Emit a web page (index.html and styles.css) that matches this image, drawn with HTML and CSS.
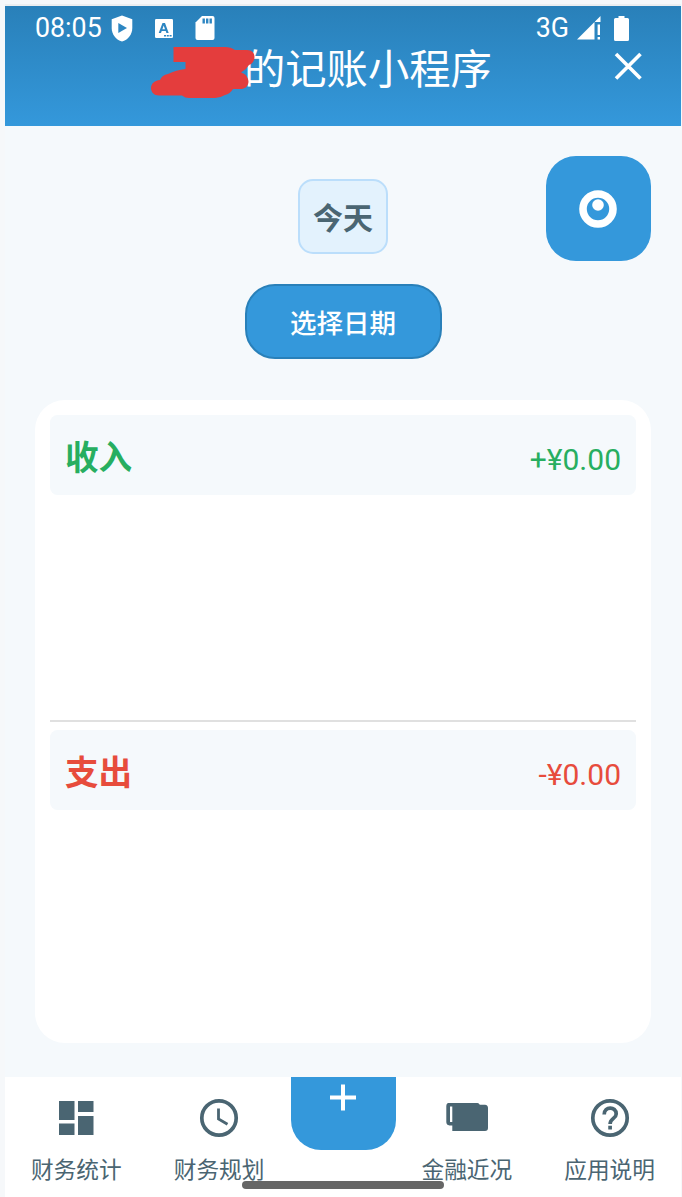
FILE: index.html
```html
<!DOCTYPE html>
<html lang="zh-CN">
<head>
  <meta charset="UTF-8">
  <title>记账小程序</title>
  <link rel="stylesheet" href="styles.css">
</head>
<body>
  <div class="phone">
    <header class="header">
      <div class="statusbar">
        <span class="time">08:05</span>
        <svg class="ic-shield" width="22" height="27" viewBox="0 0 22 27"><path fill="#fff" d="M11 0.500L21.300 4.300V13C21.300 19.500 17 24.800 11 26.600C5 24.800 0.700 19.500 0.700 13V4.300Z"/><path fill="#2d86c2" d="M7.300 8L16 13L7.300 18Z"/></svg>
        <svg class="ic-letter" width="18" height="19" viewBox="0 0 18 19"><rect width="18" height="19" rx="1.2" fill="#fff"/><path fill="#2d86c2" fill-rule="evenodd" d="M7.500 4H10L13.700 14H11.400L10.700 12H6.700L6 14H3.700ZM8.700 6.600L7.400 10.200H10Z"/><path stroke="#2d86c2" stroke-width="1.4" stroke-dasharray="2 0.8" d="M9 16.700H17"/></svg>
        <svg class="ic-sd" width="20" height="24" viewBox="0 0 20 24"><path fill="#fff" d="M7 0H17.500Q19.500 0 19.500 2V22Q19.500 24 17.500 24H2.500Q0.500 24 0.500 22V6.500Z"/><path stroke="#2d86c2" stroke-width="2.4" d="M8.700 2.500V7.500M12.200 2.500V7.500M15.700 2.500V7.500"/></svg>
        <span class="net">3G</span>
        <svg class="ic-signal" width="24" height="24" viewBox="0 0 24 24"><path fill="#fff" d="M0 23.500L17.500 6V23.500ZM18 5.500L23.500 0V6H18ZM20.600 8.500H23V19H20.600ZM20.600 21H23V23.500H20.600Z"/></svg>
        <svg class="ic-battery" width="15" height="25" viewBox="0 0 15 25"><path fill="#fff" d="M4.500 0H10.500V2H13.500Q15 2 15 3.500V23.500Q15 25 13.500 25H1.500Q0 25 0 23.500V3.500Q0 2 1.500 2H4.500Z"/></svg>
      </div>
      <div class="titlebar">
        <h1>的记账小程序</h1>
        <svg class="close" width="28" height="28" viewBox="0 0 28 28"><path stroke="#fff" stroke-width="3.600" d="M2 2L26.500 26.500M26.500 2L2 26.500"/></svg>
      </div>
      <!-- name is scribbled out -->
      <svg class="scribble" width="106" height="52" viewBox="0 0 106 52"><path fill="#e43d3d" d="M22.500 0H74Q80 0 84 3H96C101 3 103.500 6 103.500 10C103.500 14 101 17 98 18Q95 23 90 25.500C95 27 97.500 31 97.500 35C97 40 93 42 90 42H82Q79 47 74 48Q69 51 64 51H38Q34 51 31 48.500H8C3 48.500 0 45 0 41C0 37 3 33.500 9 33Q11 28 17 27Q25 23 34.500 22V15H22.500Z"/></svg>
    </header>

    <main class="content">
      <div class="today">今天</div>
      <div class="pick-date">选择日期</div>
      <div class="eye-btn">
        <svg width="38" height="38" viewBox="0 0 38 38"><circle cx="19" cy="19" r="15" fill="none" stroke="#fff" stroke-width="7.600"/><circle cx="19" cy="15" r="5.800" fill="#fff"/></svg>
      </div>

      <div class="card">
        <section class="part income">
          <div class="row">
            <span class="name">收入</span>
            <span class="sum">+¥0.00</span>
          </div>
        </section>
        <section class="part expense">
          <div class="row">
            <span class="name">支出</span>
            <span class="sum">-¥0.00</span>
          </div>
        </section>
      </div>
    </main>

    <nav class="tabs">
      <div class="tab">
        <svg width="46" height="46" viewBox="0 0 46 46"><path fill="#4a6572" d="M6 6H21.500V25H6ZM25 6H40.500V17H25ZM6 28.500H21.500V40H6ZM25 21H40.500V40H25Z"/></svg>
        <span>财务统计</span>
      </div>
      <div class="tab">
        <svg width="46" height="46" viewBox="0 0 46 46"><g fill="none" stroke="#4a6572"><circle cx="23" cy="23" r="17.200" stroke-width="3.700"/><path stroke-width="2.800" d="M22.500 13.500V24L31.500 29.300"/></g></svg>
        <span>财务规划</span>
      </div>
      <div class="add">
        <svg width="28" height="28" viewBox="0 0 28 28"><path stroke="#fff" stroke-width="4" d="M1 13.500H27M14 0.500V26.500"/></svg>
      </div>
      <div class="tab">
        <svg width="46" height="46" viewBox="0 0 46 46"><path fill="#4a6572" fill-rule="evenodd" d="M4.500 8H33.500Q35 8 35.800 9.800H41Q44 10 44 13V33Q44 36 41 36H8.300V30.500H5.500Q2.300 30 2.300 27V11Q2.500 8 4.500 8ZM6 11.500V27H8.300V11.500Z"/></svg>
        <span>金融近况</span>
      </div>
      <div class="tab">
        <svg width="46" height="46" viewBox="0 0 46 46"><g fill="none" stroke="#4a6572" stroke-width="3.700"><circle cx="23" cy="23" r="17.200"/><path d="M17.200 19.500C17.200 11 29.200 11 29.200 19C29.200 23.500 23.100 23.500 23.100 29M23.100 30.800V34.500"/></g></svg>
        <span>应用说明</span>
      </div>
    </nav>
    <div class="gesture"></div>
  </div>
</body>
</html>
```
FILE: styles.css
```css
* {
  box-sizing: border-box;
}
body {
  margin: 0;
  height: 1197px;
  padding: 6px 1px 0 5px;
  background: #f6f8fa;
  font-family: Roboto, "Noto Sans CJK SC", sans-serif;
  overflow: hidden;
}
.phone {
  position: relative;
  height: 1191px;
  display: flex;
  flex-direction: column;
  background: #f5f9fc;
  box-shadow: 0 -2px 0 #eceef0;
}

/* header */
.header {
  position: relative;
  height: 120px;
  background: linear-gradient(#2980b9, #3498db);
  color: #fff;
}
.statusbar {
  height: 44px;
  padding: 0 52px 0 30px;
  display: flex;
  align-items: center;
}
.time {
  width: 76px;
  font-size: 26.8px;
}
.ic-letter { margin-left: 22px; }
.ic-sd { margin-left: 22px; }
.net {
  margin-left: auto;
  font-size: 26.8px;
}
.ic-signal { margin-left: 8px; }
.ic-battery { margin-left: 13px; }
.titlebar {
  display: flex;
  justify-content: space-between;
  padding: 0 39px 0 239px;
}
h1 {
  margin: -10px 0 0;
  font-size: 41.3px;
  font-weight: 400;
  line-height: 60px;
}
.close { margin-top: 2px; }
.scribble {
  position: absolute;
  left: 146px;
  top: 41px;
}

/* content */
.content {
  position: relative;
  flex: 1;
  padding: 53px 30px 34px;
  display: flex;
  flex-direction: column;
  align-items: center;
}
.today,
.pick-date {
  height: 75px;
  display: flex;
  align-items: center;
  justify-content: center;
}
.today {
  width: 90px;
  padding-bottom: 2px;
  border: 2px solid #bbdefb;
  border-radius: 15px;
  background: #e3f2fd;
  color: #4a6572;
  font-size: 30px;
  font-weight: 700;
}
.pick-date {
  width: 197px;
  margin-top: 30px;
  border: 2px solid #2980b9;
  border-radius: 30px;
  background: #3498db;
  color: #fff;
  font-size: 26.5px;
  font-weight: 500;
}
.eye-btn {
  position: absolute;
  top: 30px;
  right: 30px;
  width: 105px;
  height: 105px;
  padding-right: 1px;
  border-radius: 30px;
  background: #3498db;
  display: flex;
  align-items: center;
  justify-content: center;
}
.card {
  flex: 1;
  align-self: stretch;
  margin-top: 41px;
  padding: 15px 15px 0;
  border-radius: 30px;
  background: #fff;
}
.income {
  height: 307px;
  border-bottom: 2px solid #e0e0e0;
}
.expense { padding-top: 8px; }
.row {
  height: 80px;
  padding: 0 15px;
  border-radius: 7.5px;
  background: #f5f9fc;
  display: flex;
  align-items: center;
  justify-content: space-between;
}
.name {
  font-size: 33.6px;
  font-weight: 700;
}
.sum {
  padding-top: 9px;
  font-size: 30px;
}
.income .row { color: #27ae60; }
.expense .row { color: #e74c3c; }

/* bottom tabs */
.tabs {
  height: 120px;
  display: flex;
  background: #fff;
}
.tab {
  flex: 1;
  padding-top: 18px;
  display: flex;
  flex-direction: column;
  align-items: center;
  color: #4a6572;
  font-size: 22.7px;
  line-height: 34px;
}
.tab span { margin-top: 13px; }
.add {
  width: 105px;
  height: 73px;
  padding-top: 7px;
  border-radius: 0 0 30px 30px;
  background: #3498db;
  text-align: center;
}
.gesture {
  position: absolute;
  left: 237px;
  bottom: 8px;
  width: 202px;
  height: 8px;
  border-radius: 4px;
  background: #666;
}
```
